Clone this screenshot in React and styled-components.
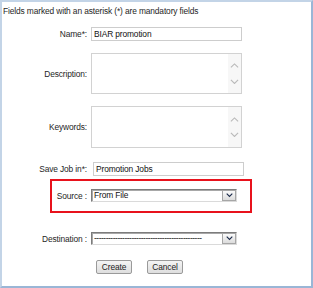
import React from 'react'
import styled, { createGlobalStyle } from 'styled-components'

const GlobalStyle = createGlobalStyle`
  html, body {
    margin: 0;
    padding: 0;
    background: #fff;
  }
  body {
    font-family: "Liberation Sans", Arial, sans-serif;
    font-size: 8.4px;
    letter-spacing: -0.12px;
    color: #222;
  }
`;

function Chevron({ up, color = '#b9b9b9', size = 9, stroke = 1.2 }) {
  return (
    <svg width={size} height={size * 0.6} viewBox="0 0 10 6">
      <path
        d={up ? 'M1 5 L5 1 L9 5' : 'M1 1 L5 5 L9 1'}
        fill="none"
        stroke={color}
        strokeWidth={stroke}
      />
    </svg>
  )
}

function App() {
  return (
    <Frame>
      <GlobalStyle />
      <Note>Fields marked with an asterisk (*) are mandatory fields</Note>

      <Row $top={10}>
        <Label>Name*:</Label>
        <TextBox>BIAR promotion</TextBox>
      </Row>

      <Row $top={12}>
        <Label>Description:</Label>
        <TextArea $h={41}>
          <ScrollStrip>
            <Chevron up />
            <Chevron />
          </ScrollStrip>
        </TextArea>
      </Row>

      <Row $top={12}>
        <Label>Keywords:</Label>
        <TextArea $h={42}>
          <ScrollStrip>
            <Chevron up />
            <Chevron />
          </ScrollStrip>
        </TextArea>
      </Row>

      <Row $top={14}>
        <Label>Save Job in*:</Label>
        <TextBox $shift={2}>Promotion Jobs</TextBox>
      </Row>

      <Highlight>
        <Row $label={35} $top={0}>
          <Label>Source :</Label>
          <Select>
            <SelectText>From File</SelectText>
            <ArrowButton>
              <Chevron color="#1b2a4a" size={7} stroke={1.6} />
            </ArrowButton>
          </Select>
        </Row>
      </Highlight>

      <Row $top={19}>
        <Label>Destination :</Label>
        <Select>
          <SelectText $dashes>----------------------------------------------</SelectText>
          <ArrowButton>
            <Chevron color="#1b2a4a" size={7} stroke={1.6} />
          </ArrowButton>
        </Select>
      </Row>

      <Buttons>
        <Button>Create</Button>
        <Button>Cancel</Button>
      </Buttons>
    </Frame>
  )
}

export default App

const Frame = styled.div`
  width: 313px;
  height: 288px;
  box-sizing: border-box;
  border: 2px solid;
  border-color: #c3d4e7 #9ab6d6 #9ab6d6 #c3d4e7;
  background: #fff;
  display: flex;
  flex-direction: column;
  overflow: hidden;
`;

const Note = styled.div`
  margin: 4px 0 0 1px;
  line-height: 11px;
  color: #1e1e1e;
  white-space: nowrap;
`;

const Row = styled.div`
  display: grid;
  grid-template-columns: ${(p) => p.$label ?? 85}px auto;
  column-gap: 4px;
  align-items: center;
  justify-content: start;
  margin-top: ${(p) => p.$top}px;
`;

const Label = styled.div`
  text-align: right;
  white-space: nowrap;
  color: #1e1e1e;
`;

const TextBox = styled.div`
  width: 151px;
  height: 14px;
  box-sizing: border-box;
  border: 1px solid #cdcdcd;
  margin-left: ${(p) => p.$shift ?? 0}px;
  padding: 0 2px;
  line-height: 12px;
  color: #111;
  white-space: nowrap;
`;

const TextArea = styled.div`
  width: 151px;
  height: ${(p) => p.$h}px;
  box-sizing: border-box;
  border: 1px solid #d2d2d2;
  display: flex;
  justify-content: flex-end;
`;

const ScrollStrip = styled.div`
  width: 13px;
  background: #f7f7f7;
  display: flex;
  flex-direction: column;
  align-items: center;
  justify-content: center;
  gap: 10px;
`;

const Highlight = styled.div`
  margin: 3px 0 0 48px;
  width: 202px;
  height: 34px;
  box-sizing: border-box;
  border: 2px solid #e8121c;
  padding-top: 8px;
`;

const Select = styled.div`
  width: 146px;
  height: 13px;
  box-sizing: border-box;
  border: 1px solid;
  border-color: #7c7c7c #dadada #dadada #7c7c7c;
  box-shadow: inset 1px 1px 0 #a8a8a8;
  display: flex;
  align-items: stretch;
  background: #fff;
`;

const SelectText = styled.div`
  flex: 1;
  padding-left: 2px;
  line-height: 11px;
  color: #111;
  white-space: nowrap;
  overflow: hidden;
  letter-spacing: ${(p) => (p.$dashes ? '-0.45px' : '-0.12px')};
`;

const ArrowButton = styled.div`
  width: 14px;
  box-sizing: border-box;
  border: 1px solid #a6a6a6;
  background: linear-gradient(#fbfbfb, #dcdcdc);
  display: flex;
  align-items: center;
  justify-content: center;
`;

const Buttons = styled.div`
  display: flex;
  gap: 15px;
  margin: 15px 0 0 94px;
`;

const Button = styled.div`
  width: 36px;
  height: 14px;
  box-sizing: border-box;
  border: 1px solid #9a9a9a;
  border-radius: 2px;
  background: linear-gradient(#f4f4f4, #dedede);
  text-align: center;
  line-height: 12px;
  color: #222;
`;
